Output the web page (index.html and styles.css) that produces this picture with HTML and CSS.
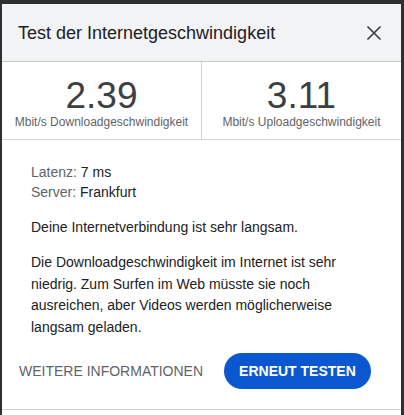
FILE: index.html
```html
<!DOCTYPE html>
<html lang="de">
<head>
  <meta charset="UTF-8">
  <title>Test der Internetgeschwindigkeit</title>
  <link rel="stylesheet" href="styles.css">
</head>
<body>

<div class="dialog">

  <header class="dialog-head">
    <h1>Test der Internetgeschwindigkeit</h1>
    <button class="close" aria-label="Schließen">
      <svg width="24" height="24" viewBox="0 0 24 24"><path d="M5.5 5.5L18.5 18.5M18.5 5.5L5.5 18.5"/></svg>
    </button>
  </header>

  <!-- Results -->
  <section class="stats">
    <div class="stat">
      <div class="stat-value">2.39</div>
      <div class="stat-label">Mbit/s Downloadgeschwindigkeit</div>
    </div>
    <div class="stat">
      <div class="stat-value">3.11</div>
      <div class="stat-label">Mbit/s Uploadgeschwindigkeit</div>
    </div>
  </section>

  <section class="details">
    <div class="meta">
      <div><span class="key">Latenz:</span> 7 ms</div>
      <div><span class="key">Server:</span> Frankfurt</div>
    </div>
    <p>Deine Internetverbindung ist sehr langsam.</p>
    <p>Die Downloadgeschwindigkeit im Internet ist sehr niedrig. Zum Surfen im Web müsste sie noch ausreichen, aber Videos werden möglicherweise langsam geladen.</p>
  </section>

  <footer class="actions">
    <button class="btn-text">WEITERE INFORMATIONEN</button>
    <button class="btn-primary">ERNEUT TESTEN</button>
  </footer>

</div>

</body>
</html>
```

FILE: styles.css
```css
* { box-sizing: border-box; margin: 0; padding: 0; }
html, body { height: 100%; }
body { font-family: "Liberation Sans", Arial, sans-serif; background: #2f2f2f; color: #202124; padding: 4px 3px 0 2px; }

.dialog { background: #fff; height: 100%; }

.dialog-head {
  display: flex; align-items: center; justify-content: space-between;
  height: 58px; padding: 0 15px 0 16px;
  background: #f1f3f4; border-bottom: 1px solid #c6c6c6;
}
.dialog-head h1 { font-size: 18px; font-weight: normal; color: #202124; line-height: 57px; margin-top: 1px; }
.close { background: none; border: none; width: 24px; height: 24px; cursor: pointer; margin-top: 1px; }
.close svg { display: block; stroke: #3c4043; stroke-width: 1.7; fill: none; }

.stats { display: flex; height: 78px; border-bottom: 1px solid #d4d4d4; }
.stat { flex: 1; text-align: center; padding-top: 15px; }
.stat + .stat { border-left: 1px solid #d4d4d4; }
.stat-value { font-size: 37px; line-height: 37px; color: #3c4043; }
.stat-label { font-size: 12px; line-height: 16px; color: #5f6368; }

.details { padding: 22px 30px 0 29px; font-size: 14px; }
.meta { line-height: 20px; }
.key { color: #5f6368; }
.details p { line-height: 22px; margin-top: 14px; }
.details p + p { line-height: 21.7px; }

.actions {
  display: flex; align-items: center; gap: 21px;
  padding: 14px 0 20px 17px;
  border-bottom: 1px solid #d4d4d4;
}
.btn-text {
  background: none; border: none; font-family: inherit;
  font-size: 14px; color: #5f6368; cursor: pointer;
}
.btn-primary {
  background: #0b57d0; color: #fff; border: none; border-radius: 18px;
  height: 36px; padding: 0 15px; font-family: inherit;
  font-size: 14px; font-weight: bold; cursor: pointer;
}
```
